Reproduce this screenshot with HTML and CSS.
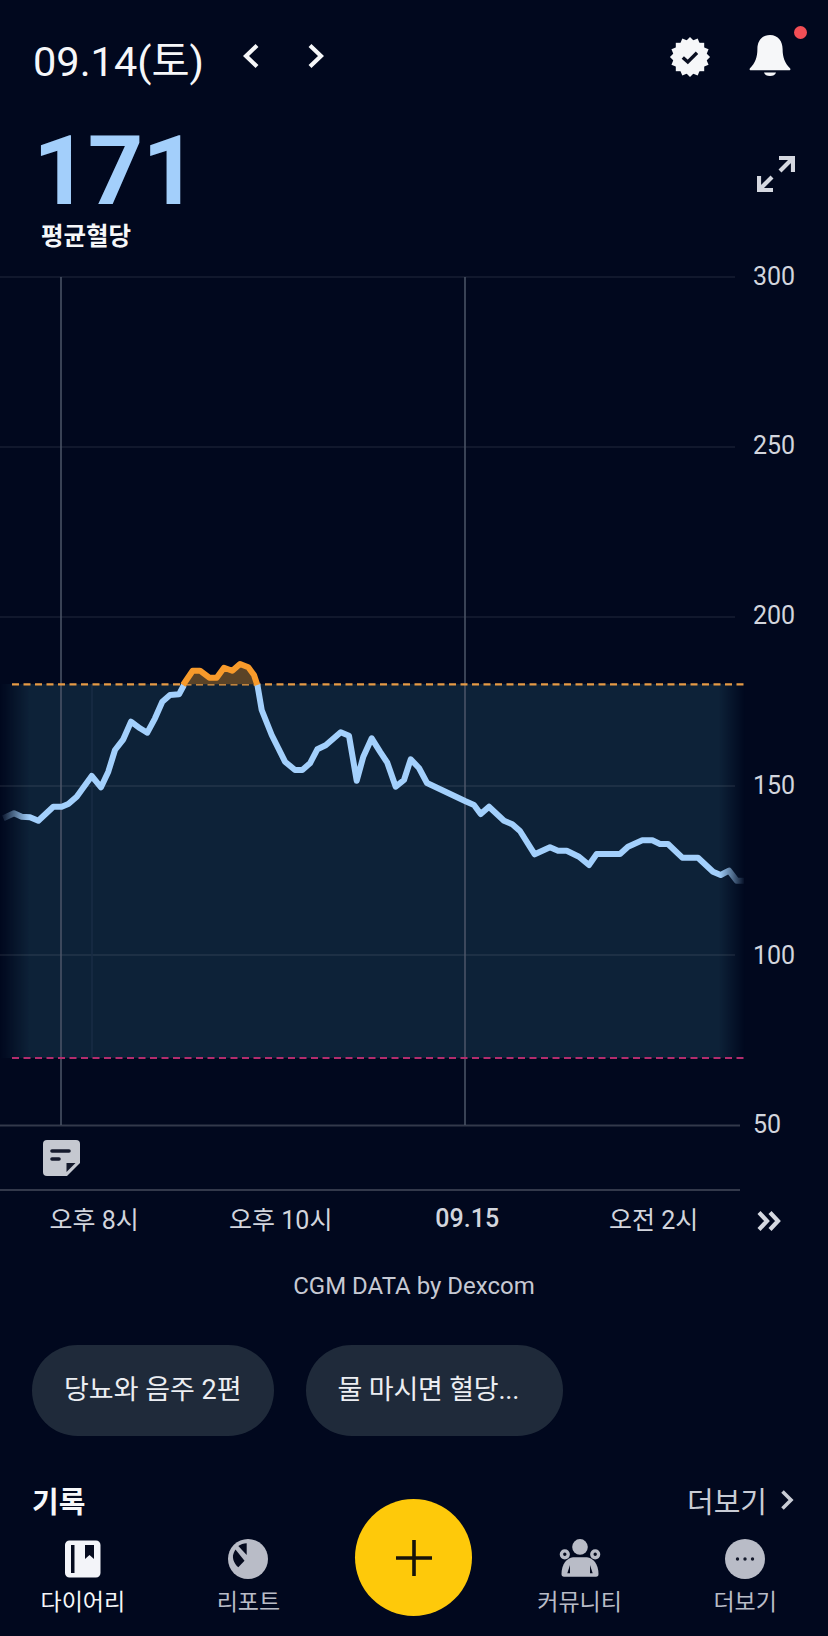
FILE: index.html
```html
<!DOCTYPE html>
<html lang="ko">
<head>
<meta charset="utf-8" />
<title>평균혈당</title>
<link rel="stylesheet" href="styles.css">
</head>
<body>
<div class="page">
    <div class="top_bar">
        <span class="top_date">09.14(토)</span>
        <svg class="top_arrow" width="16" height="26" viewBox="0 0 16 26"><path d="M14 2.5 3 13l11 10.5" /></svg>
        <svg class="top_arrow next" width="16" height="26" viewBox="0 0 16 26"><path d="M2 2.5 13 13 2 23.5" /></svg>
        <svg class="top_badge" width="42" height="42" viewBox="0 0 42 42">
            <g fill="#f6f7f9">
                <rect x="6.8" y="6.8" width="28.4" height="28.4" />
                <rect x="6.8" y="6.8" width="28.4" height="28.4" transform="rotate(22.5 21 21)" />
                <rect x="6.8" y="6.8" width="28.4" height="28.4" transform="rotate(45 21 21)" />
                <rect x="6.8" y="6.8" width="28.4" height="28.4" transform="rotate(67.5 21 21)" />
            </g>
            <path d="M13.8 21.5 18.8 26 28 16.8" fill="none" stroke="#0a0f22" stroke-width="3.4" />
        </svg>
        <div class="top_bell">
            <svg width="42" height="42" viewBox="0 0 42 42">
                <path d="M21 1c8.4 0 12.6 6.5 12.6 14 0 8 2.2 14.4 7.4 19.2.8.8.4 2-.8 2H1.800c-1.200 0-1.600-1.200-.8-2C6.200 29.400 8.400 23 8.400 15 8.400 7.500 12.600 1 21 1Z" fill="#f6f7f9" />
                <path d="M15 38.500h12c-.6 2.400-3 3.500-6 3.500s-5.400-1.100-6-3.500Z" fill="#f6f7f9" />
            </svg>
            <i class="bell_dot"></i>
        </div>
    </div>

    <div class="summary">
        <div>
            <div class="summary_value">171</div>
            <div class="summary_label">평균혈당</div>
        </div>
        <svg class="summary_expand" width="38" height="38" viewBox="0 0 38 38">
            <path d="M22 3h14v14M35 4 23 16M16 35H2V21M3 34l12-12" fill="none" stroke="#d5d8e0" stroke-width="4.200" />
        </svg>
    </div>

    <!-- 차트: 50~300 눈금, 목표 범위 70~180 -->
    <svg class="chart" width="828" height="940" viewBox="0 255 828 940">
        <defs>
            <linearGradient id="edgeFade" x1="0" x2="745" y1="0" y2="0" gradientUnits="userSpaceOnUse">
                <stop offset="0" stop-color="#000" />
                <stop offset="0.04" stop-color="#fff" />
                <stop offset="0.965" stop-color="#fff" />
                <stop offset="1" stop-color="#000" />
            </linearGradient>
            <mask id="edgeMask" maskUnits="userSpaceOnUse" x="0" y="255" width="828" height="940">
                <rect x="0" y="255" width="828" height="940" fill="url(#edgeFade)" />
            </mask>
        </defs>

        <rect class="band" x="0" y="684" width="745" height="374" mask="url(#edgeMask)" />

        <g class="grid">
            <path d="M0 277H735M0 447H735M0 617H735M0 786H735M0 955H735" />
            <path class="grid_strong" d="M0 1125.500H740M0 1190H740" />
        </g>
        <path class="tick_faint" d="M92 684V1058" />
        <path class="tick" d="M61 277V1125M465 277V1125" />

        <path class="limit_high" d="M12 684.300H745" />
        <path class="limit_low" d="M12 1058H745" />

        <path class="over_fill" d="M183 684.300 192.700 670.700H200L209.300 677.700H216.700L224 667.700 232.300 670.700 240 664 248.300 667.300 254 675 257.300 684.300Z" />

        <g mask="url(#edgeMask)">
            <polyline class="curve" points="3.300,818.300 14,813.300 21.700,816.700 30,817.300 38.300,820.700 53.300,806.700 61.700,806.700 68.300,804 76.700,796.700 91.700,776 101,787.300 108.300,771.700 115,750 123.300,739.300 131,721.700 140,728.300 147.300,732.700 155,718.300 162.300,701.700 170,695 179,694.300 184,685" />
            <polyline class="curve" points="257.300,684.300 261.700,710 271.700,735 285,761.700 295,770 302.300,770 310,763.300 317.300,749.300 325.700,745.300 340.700,732.300 349,735.700 356.700,780.700 363.300,756.700 371.700,738.300 380,751.700 387.300,762.700 395.700,786.700 404,780 410.700,759.300 419,768 427,783 465,801 474,805 480.700,814 489,806.700 504,820.700 512.300,824.300 520,831 534.700,854.300 550,847.300 558,850.700 566.700,850.700 579,856.700 589,865 596.700,854 620,854 628,846.700 642.300,840.300 652.300,840.300 660,844 668,844 682.300,857.700 698,857.700 713,871.700 720.700,875 729,870.700 736.700,880.700 744,880.700" />
        </g>
        <polyline class="curve over" points="183,685 192.700,670.700 200,670.700 209.300,677.700 216.700,677.700 224,667.700 232.300,670.700 240,664 248.300,667.300 254,675 257.300,685" />

        <g class="axis_y">
            <text x="753" y="285">300</text>
            <text x="753" y="454">250</text>
            <text x="753" y="624">200</text>
            <text x="753" y="794">150</text>
            <text x="753" y="964">100</text>
            <text x="753" y="1133">50</text>
        </g>

        <!-- 메모 아이콘 -->
        <path d="M47 1140H76a4 4 0 0 1 4 4V1163L67 1176H47a4 4 0 0 1-4-4V1144a4 4 0 0 1 4-4Z" fill="#c5c8d0" />
        <path d="M52 1151H69M52 1159H59" stroke="#14192b" stroke-width="3.600" stroke-linecap="round" />
        <path d="M66.500 1172V1163H75.500Z" fill="#14192b" />
    </svg>

    <div class="axis_x">
        <span>오후 8시</span>
        <span>오후 10시</span>
        <span class="axis_day">09.15</span>
        <span>오전 2시</span>
        <svg width="26" height="22" viewBox="0 0 26 22"><path d="M3 2.500 11 11 3 19.500M14 2.500 22 11 14 19.500" fill="none" stroke="#d5d8e0" stroke-width="4.200" /></svg>
    </div>

    <div class="source">CGM DATA by Dexcom</div>

    <div class="pills">
        <span class="pill">당뇨와 음주 2편</span>
        <span class="pill pill_long">물 마시면 혈당...</span>
    </div>

    <div class="section_head">
        <h4>기록</h4>
        <span class="section_more">더보기
            <svg width="14" height="22" viewBox="0 0 14 22"><path d="M2.500 2.500 11 11 2.500 19.500" fill="none" stroke="#c9ccd5" stroke-width="3.600" /></svg>
        </span>
    </div>

    <div class="tab_bar">
        <div class="tab tab_on">
            <svg width="40" height="40" viewBox="0 0 40 40">
                <path d="M6.500 1.500H33a4.500 4.500 0 0 1 4.500 4.500V34a4.500 4.500 0 0 1-4.500 4.500H6.500A4.500 4.500 0 0 1 2 34V6a4.500 4.500 0 0 1 4.500-4.500Z" fill="#f3f4f9" />
                <path d="M8 6H11.500V34H8Z" fill="#050a1e" />
                <path d="M22 6H31V20L26.500 16 22 20Z" fill="#050a1e" />
            </svg>
            <span>다이어리</span>
        </div>
        <div class="tab">
            <svg width="40" height="40" viewBox="0 0 40 40">
                <circle cx="20" cy="20" r="20" fill="#b9bcc7" />
                <path d="M10.300 7C12.500 5.500 15.500 4.500 18.700 4.300V16Z" fill="#050a1e" />
                <path d="M5 16.500C5.500 14 6.500 12 7.500 10.500L16.500 21.700 10.300 28.300C7 25.500 4.500 21 5 16.500Z" fill="#050a1e" />
            </svg>
            <span>리포트</span>
        </div>
        <div class="tab tab_fab">
            <span class="fab">
                <svg width="40" height="40" viewBox="0 0 40 40"><path d="M20 2V38M2 20H38" stroke="#16130a" stroke-width="3.600" /></svg>
            </span>
        </div>
        <div class="tab">
            <svg width="42" height="40" viewBox="0 0 42 40">
                <circle cx="21" cy="7.900" r="7.800" fill="#b9bcc7" />
                <circle cx="5.800" cy="15.300" r="3.400" fill="#050a1e" stroke="#b9bcc7" stroke-width="3.400" />
                <circle cx="36.200" cy="15.300" r="3.400" fill="#050a1e" stroke="#b9bcc7" stroke-width="3.400" />
                <path d="M2.500 35C2.500 25 8 19 14 18.300H28C34 19 39.500 25 39.500 35Q39.500 37.700 37 37.700H5Q2.500 37.700 2.500 35Z" fill="#b9bcc7" />
                <path d="M8.300 34.300 11 26V34.300ZM33.700 34.300 31 26V34.300Z" fill="#050a1e" />
            </svg>
            <span>커뮤니티</span>
        </div>
        <div class="tab">
            <svg width="40" height="40" viewBox="0 0 40 40">
                <circle cx="20" cy="20" r="20" fill="#b9bcc7" />
                <circle cx="12.500" cy="20" r="1.700" fill="#14192b" />
                <circle cx="20" cy="20" r="1.700" fill="#14192b" />
                <circle cx="27.500" cy="20" r="1.700" fill="#14192b" />
            </svg>
            <span>더보기</span>
        </div>
    </div>
</div>
</body>
</html>
```

FILE: styles.css
```css
* {
    margin:0;
    padding:0;
    box-sizing:border-box;
    font-family:Roboto,'Noto Sans CJK KR',sans-serif;
}
body,html {
    width:100%;
    height:100%;
    background:#01081e;
}
.page {
    position:relative;
    width:828px;
    height:1636px;
    overflow:hidden;
    background:#01081e;
}

.top_bar {
    display:flex;
    align-items:center;
    height:57px;
    margin-top:30px;
    padding-left:33px;
}
.top_date {
    width:210px;
    margin-top:6px;
    font-size:41.500px;
    line-height:57px;
    color:#f6f7f9;
}
.top_arrow {
    margin-top:-6px;
    fill:none;
    stroke:#f6f7f9;
    stroke-width:4.200;
}
.top_arrow.next {
    margin-left:49px;
}
.top_badge {
    margin-left:345px;
    margin-top:-3px;
}
.top_bell {
    position:relative;
    margin-left:38px;
    margin-top:-3px;
}
.bell_dot {
    position:absolute;
    top:-8px;
    right:-16px;
    width:13px;
    height:13px;
    border-radius:50%;
    background:#f24e55;
}

.summary {
    display:flex;
    justify-content:space-between;
    align-items:flex-start;
    height:168px;
    padding:0 33px 0 33px;
}
.summary_value {
    font-size:97px;
    font-weight:700;
    line-height:92px;
    margin-top:38px;
    color:#a3cffb;
    letter-spacing:-1px;
}
.summary_label {
    font-size:24.500px;
    font-weight:700;
    line-height:32px;
    margin:4px 0 0 8px;
    color:#f6f7f9;
}
.summary_expand {
    margin-top:68px;
}

.chart {
    display:block;
}
.band {
    fill:#0d2238;
}
.grid path {
    fill:none;
    stroke:#ffffff;
    stroke-opacity:.09;
    stroke-width:1.500;
}
.grid .grid_strong {
    stroke-opacity:.2;
    stroke-width:2;
}
.tick {
    fill:none;
    stroke:#4c5568;
    stroke-width:1.500;
}
.tick_faint {
    fill:none;
    stroke:#182c44;
    stroke-width:1.500;
}
.limit_high,.limit_low {
    fill:none;
    stroke-width:2.200;
    stroke-dasharray:7 4.500;
}
.limit_high {
    stroke:#e69a45;
}
.limit_low {
    stroke:#b32c6d;
}
.over_fill {
    fill:#5a4327;
}
.curve {
    fill:none;
    stroke:#a3d0fc;
    stroke-width:6;
    stroke-linejoin:round;
}
.curve.over {
    stroke:#f79a2b;
}
.axis_y text {
    font-size:25px;
    fill:#d2d5dd;
}

.axis_x {
    display:grid;
    grid-template-columns:repeat(4,186.500px) 26px;
    align-items:center;
    justify-items:center;
    height:46px;
    padding-left:1px;
    font-size:25px;
    color:#d2d5dd;
}
.axis_day {
    font-weight:500;
}
.axis_x svg {
    margin:6px 0 0 18px;
}

.source {
    height:101px;
    padding-top:27px;
    text-align:center;
    font-size:24px;
    line-height:36px;
    color:#c6c9d3;
}

.pills {
    display:flex;
    gap:32px;
    margin-top:3px;
    padding-left:32px;
}
.pill {
    height:91px;
    padding:0 32px;
    border-radius:46px;
    background:#1f2a3a;
    font-size:27px;
    line-height:91px;
    color:#eceef2;
    white-space:nowrap;
}
.pill_long {
    width:257px;
    padding-right:0;
    letter-spacing:-.2px;
}

.section_head {
    display:flex;
    justify-content:space-between;
    align-items:center;
    height:40px;
    margin-top:44px;
    padding:0 34px 0 32px;
}
.section_head h4 {
    font-size:29px;
    font-weight:700;
    color:#f6f7f9;
}
.section_more {
    display:flex;
    align-items:center;
    gap:13px;
    font-size:29px;
    color:#c9ccd5;
}

.tab_bar {
    position:absolute;
    left:0;
    bottom:0;
    display:grid;
    grid-template-columns:repeat(5,1fr);
    width:828px;
    height:102px;
    padding-top:5px;
}
.tab {
    display:flex;
    flex-direction:column;
    align-items:center;
    gap:8px;
    font-size:23px;
    line-height:32px;
    color:#b9bcc7;
}
.tab_on {
    color:#f6f7f9;
}
.tab_fab {
    position:relative;
}
.fab {
    position:absolute;
    top:-40px;
    left:50%;
    display:flex;
    align-items:center;
    justify-content:center;
    width:117px;
    height:117px;
    margin-left:-58.500px;
    border-radius:50%;
    background:#fec90a;
}
```
